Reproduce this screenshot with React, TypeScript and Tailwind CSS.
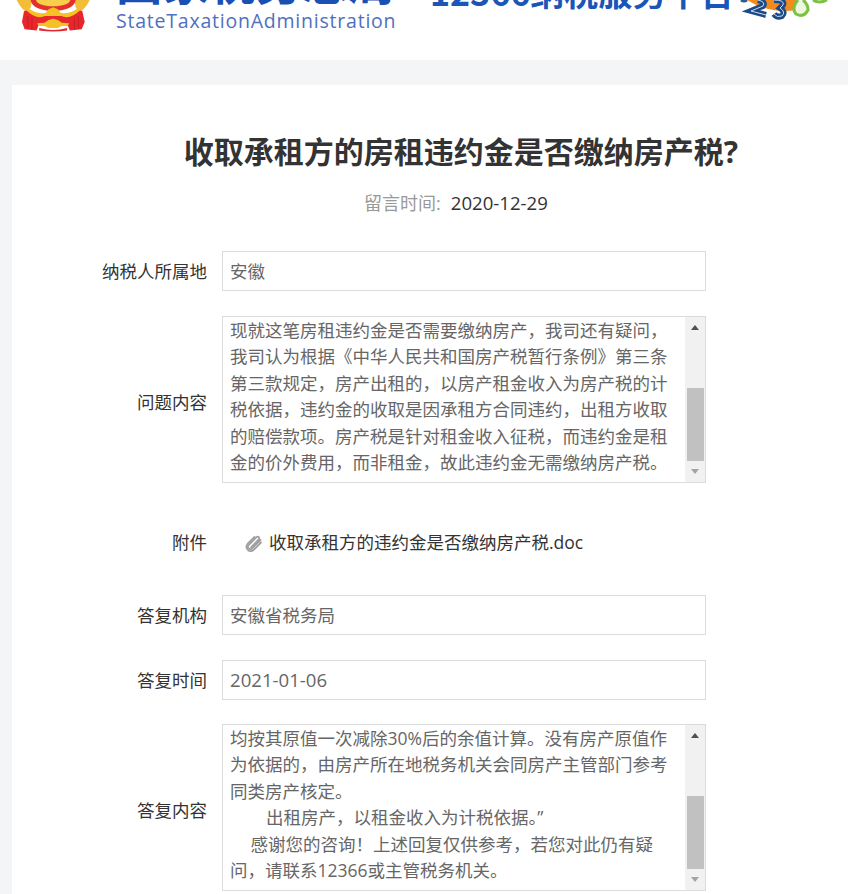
import React from "react";

const cjk = "font-['Open_Sans','Noto_Sans_CJK_SC',sans-serif]";

function Scrollbar({ thumbTop }: { thumbTop: string }) {
  return (
    <div className="w-5 shrink-0 bg-[#f1f1f1] flex flex-col items-center">
      <div className="h-[21px] flex items-center justify-center shrink-0">
        <div className="w-0 h-0 border-x-[4px] border-x-transparent border-b-[5px] border-b-[#505050]" />
      </div>
      <div className={`w-[17px] h-[73px] bg-[#c1c1c1] shrink-0 ${thumbTop}`} />
      <div className="mt-auto h-[21px] flex items-center justify-center shrink-0">
        <div className="w-0 h-0 border-x-[4px] border-x-transparent border-t-[5px] border-t-[#a3a3a3]" />
      </div>
    </div>
  );
}

function Label({ children, nudge }: { children: React.ReactNode; nudge?: string }) {
  return <div className={`w-[195px] shrink-0 text-right text-[#333] ${nudge ?? ""}`}>{children}</div>;
}

function InputRow({
  label,
  value,
  className,
  valueClass,
}: {
  label: string;
  value: string;
  className: string;
  valueClass?: string;
}) {
  return (
    <div className={`flex items-center gap-[15px] ${className}`}>
      <Label>{label}</Label>
      <div className={`w-[484px] h-10 border border-[#dcdcdc] px-[7px] flex items-center text-[#666] ${valueClass ?? ""}`}>
        {value}
      </div>
    </div>
  );
}

function AreaRow({
  label,
  lines,
  className,
}: {
  label: string;
  lines: string[];
  className: string;
}) {
  return (
    <div className={`flex items-center gap-[15px] ${className}`}>
      <Label nudge="mt-1">{label}</Label>
      <div className="w-[484px] h-[167px] border border-[#dcdcdc] flex">
        <div className="flex-1 overflow-hidden pl-[7px] text-[#666] leading-[26.4px] whitespace-pre [word-spacing:0.6px]">
          {lines.map((line) => (
            <div key={line}>{line}</div>
          ))}
        </div>
        <Scrollbar thumbTop="mt-[50px]" />
      </div>
    </div>
  );
}

function Emblem() {
  return (
    <svg width="78" height="32" viewBox="45 0 235 96" className="shrink-0">
      {/* wheat sides */}
      <path d="M50 0 H96 L92 24 L76 34 Q60 22 50 0 Z" fill="#f3bd3a" />
      <path d="M270 0 H224 L228 24 L244 34 Q260 22 270 0 Z" fill="#f3bd3a" />
      {/* centre */}
      <path d="M92 0 H228 Q224 30 160 34 Q96 30 92 0 Z" fill="#e5312b" />
      <path d="M108 0 H212 Q206 18 160 19 Q114 18 108 0 Z" fill="#f7cf4a" />
      {/* red cloth */}
      <path d="M72 34 L84 30 Q120 50 160 44 Q200 50 236 30 L248 34 L255 66 L246 88 L210 92 L204 76 L116 76 L110 92 L74 88 L66 66 Z" fill="#e8272c" />
      <path d="M84 48 V86 M96 52 V88 M224 52 V88 M236 48 V86" stroke="#c81e25" strokeWidth="3" />
      {/* ribbon */}
      <path d="M82 22 Q112 46 138 38 L146 28 L160 22 L174 28 L182 38 Q208 46 238 22 L242 30 Q212 60 184 48 L136 48 Q108 60 78 30 Z" fill="#f5c226" />
      <path d="M112 70 L134 68 L146 60 L160 56 L174 60 L186 68 L208 70 L204 78 L186 78 L174 84 H146 L134 78 L116 78 Z" fill="#f5c226" />
      <path d="M118 84 Q160 96 202 84 L202 92 Q160 98 118 92 Z" fill="#e8272c" />
    </svg>
  );
}

function Logo12366() {
  return (
    <svg width="100" height="22" viewBox="0 0 100 22" className="shrink-0">
      <path d="M8 0 Q30 14 58 10 L60 0 Z" fill="#f28a1e" />
      <path d="M2 0 Q5 2 8 0" fill="none" stroke="#2a5c99" strokeWidth="3" />
      <path d="M19 0 Q27 2 24 6 L12 11 L27 15" fill="none" stroke="#1d4a86" strokeWidth="6" />
      <path d="M19 0 Q27 2 24 6 L12 11 L27 15" fill="none" stroke="#c8dcf0" strokeWidth="1" />
      <path d="M35 0 Q46 0 44 5 L41 8 Q47 12 43 16 Q38 18 35 14" fill="none" stroke="#1d4a86" strokeWidth="6" />
      <path d="M35 0 Q46 0 44 5 L41 8 Q47 12 43 16 Q38 18 35 14" fill="none" stroke="#c8dcf0" strokeWidth="1" />
      <path d="M59 0 Q52 8 57 14 Q65 18 69 10 Q69 4 64 0" fill="#eef7e2" stroke="#7cc242" strokeWidth="3" />
      <path d="M74 0 Q80 4 88 0" fill="none" stroke="#7cc242" strokeWidth="3" />
    </svg>
  );
}

export default function App() {
  return (
    <div className={`h-[894px] w-[848px] overflow-hidden bg-[#f4f5f7] text-[17.5px] leading-[26px] ${cjk}`}>
      <header className="h-[60px] bg-white overflow-hidden flex items-start">
        <div className="ml-[15px] w-[101px] shrink-0">
          <Emblem />
        </div>
        <div className="w-[314px] shrink-0 flex flex-col">
          <div className="-mt-[48px] h-[55px] text-[46.5px] leading-[55px] font-bold text-[#1a4fb4] whitespace-nowrap font-['Noto_Sans_CJK_SC',sans-serif]">
            国家税务总局
          </div>
          <div className="mt-[4px] text-[#4f6fc0] text-[19.5px] leading-[20px] tracking-[0.78px] whitespace-nowrap font-['Open_Sans',sans-serif]">
            StateTaxationAdministration
          </div>
        </div>
        <div className="-mt-[31px] w-[309px] shrink-0 h-[46px] text-[34px] leading-[46px] font-bold text-[#1a55b8] whitespace-nowrap font-['Noto_Sans_CJK_SC',sans-serif]">
          12366纳税服务平台
        </div>
        <Logo12366 />
      </header>

      <main className="mt-[25px] ml-3 w-[898px] h-[900px] bg-white flex flex-col">
        <h1 className="mt-[46px] h-[42px] text-center text-[30px] leading-[42px] font-bold text-[#333]">
          收取承租方的房租违约金是否缴纳房产税?
        </h1>
        <p className="mt-[17px] h-[26px] pr-[10px] text-center text-[#333]">
          <span className="text-[#999] text-[18px]">留言时间:</span>
          <span className="ml-[10px] text-[18.6px]">2020-12-29</span>
        </p>

        <InputRow label="纳税人所属地" value="安徽" className="mt-[35px]" />
        <AreaRow
          label="问题内容"
          className="mt-[25px]"
          lines={[
            "现就这笔房租违约金是否需要缴纳房产，我司还有疑问，",
            "我司认为根据《中华人民共和国房产税暂行条例》第三条",
            "第三款规定，房产出租的，以房产租金收入为房产税的计",
            "税依据，违约金的收取是因承租方合同违约，出租方收取",
            "的赔偿款项。房产税是针对租金收入征税，而违约金是租",
            "金的价外费用，而非租金，故此违约金无需缴纳房产税。",
          ]}
        />
        <div className="mt-[46px] h-[26px] flex items-center gap-[15px]">
          <Label>附件</Label>
          <div className="flex items-center pl-[23px] text-[#333] whitespace-nowrap">
            <svg width="18" height="18" viewBox="0 0 18 18" className="mr-[6px] mt-[3px]" fill="none" stroke="#a0a0a0" strokeWidth="1.8" strokeLinecap="round">
              <path d="M15.5 5 L7 13.5 a2.4 2.4 0 0 1 -3.4 -3.4 L11.5 2.2 a1.6 1.6 0 0 1 2.3 2.3 L6 12.3" />
              <path d="M16 7.5 L8.5 15 a4 4 0 0 1 -6 -0.5 a4 4 0 0 1 0 -5.5 L9.5 2" />
            </svg>
            收取承租方的违约金是否缴纳房产税.doc
          </div>
        </div>
        <InputRow label="答复机构" value="安徽省税务局" className="mt-[40px]" />
        <InputRow label="答复时间" value="2021-01-06" className="mt-[25px]" valueClass="text-[18.6px]" />
        <AreaRow
          label="答复内容"
          className="mt-[24px]"
          lines={[
            "均按其原值一次减除30%后的余值计算。没有房产原值作",
            "为依据的，由房产所在地税务机关会同房产主管部门参考",
            "同类房产核定。",
            "       出租房产，以租金收入为计税依据。” ",
            "    感谢您的咨询！上述回复仅供参考，若您对此仍有疑",
            "问，请联系12366或主管税务机关。",
          ]}
        />
      </main>
    </div>
  );
}
